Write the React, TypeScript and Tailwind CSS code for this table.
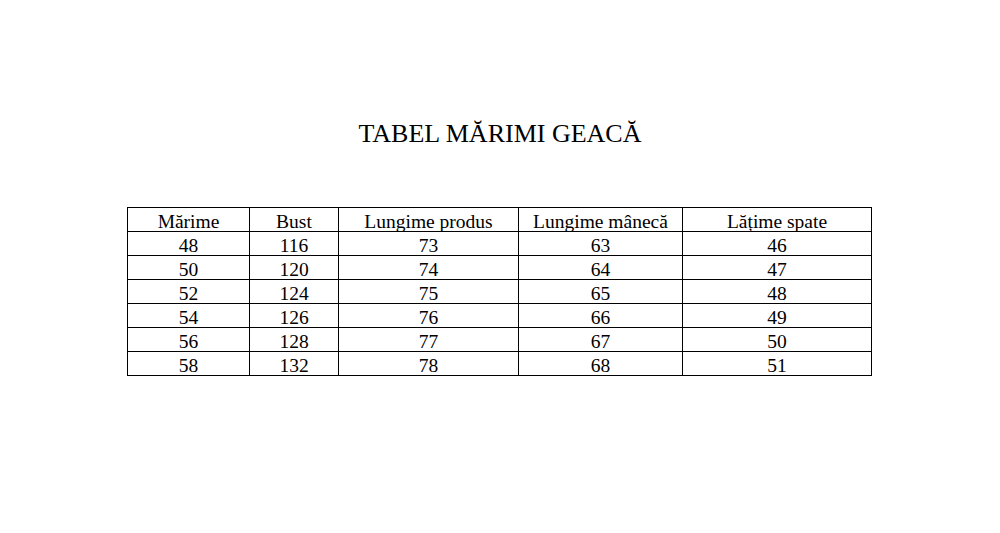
import React from "react";

const headers = ["Mărime", "Bust", "Lungime produs", "Lungime mânecă", "Lățime spate"];
const rows = [
  ["48", "116", "73", "63", "46"],
  ["50", "120", "74", "64", "47"],
  ["52", "124", "75", "65", "48"],
  ["54", "126", "76", "66", "49"],
  ["56", "128", "77", "67", "50"],
  ["58", "132", "78", "68", "51"],
];

export default function App() {
  const all = [headers, ...rows];
  return (
    <div
      className="w-[1000px] h-[533px] bg-white text-black flex flex-col items-center"
      style={{ fontFamily: '"Liberation Serif", "Times New Roman", serif' }}
    >
      <h1 className="mt-[119px] text-[26px] leading-[30px] font-normal">TABEL MĂRIMI GEACĂ</h1>
      <div className="self-start ml-[127px] mt-[58px] w-[745px] grid grid-cols-[122px_89px_180px_164px_189px] border-l border-t border-black">
        {all.map((r, i) =>
          r.map((c, j) => (
            <div
              key={`${i}-${j}`}
              className="h-6 border-r border-b border-black text-center text-[19.5px] leading-[24px] pt-[2px] overflow-hidden"
            >
              {c}
            </div>
          ))
        )}
      </div>
    </div>
  );
}
